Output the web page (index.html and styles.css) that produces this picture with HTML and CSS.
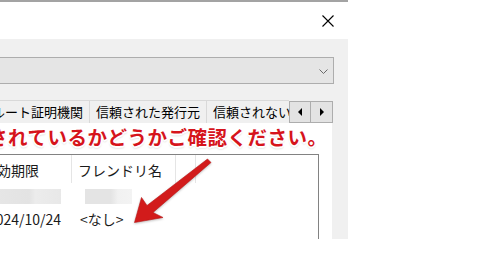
FILE: index.html
```html
<!DOCTYPE html>
<html lang="ja">
<head>
<meta charset="utf-8">
<link rel="stylesheet" href="styles.css">
</head>
<body>
<div class="window">
  <div class="titlebar">
    <svg class="close" width="12" height="12" viewBox="0 0 12 12"><path d="M0.5 0.5 L11.5 11.5 M11.5 0.5 L0.5 11.5" stroke="#000" stroke-width="1.1" fill="none"/></svg>
  </div>
  <div class="content">
    <div class="combo">
      <svg class="chev" width="9" height="5" viewBox="0 0 9 5"><path d="M0.5 0.5 L4.5 4.5 L8.5 0.5" stroke="#6a6a6a" stroke-width="1" fill="none"/></svg>
    </div>
    <div class="tabrow">
      <div class="tabs">
        <div class="tab tab-first">信頼されたルート証明機関</div>
        <div class="tab">信頼された発行元</div>
        <div class="tab">信頼されない発行元</div>
      </div>
      <div class="scroll">
        <div class="sbtn"><span class="tri tri-left"></span></div>
        <div class="sbtn"><span class="tri tri-right"></span></div>
      </div>
    </div>
    <div class="panel">
      <div class="list">
        <div class="lhead">
          <div class="col c1">有効期限</div>
          <div class="col c2">フレンドリ名</div>
          <div class="col c3"></div>
        </div>
        <div class="lrow blurrow">
          <div class="blur b1"></div>
          <div class="blur b2"></div>
        </div>
        <div class="lrow datarow">
          <div class="col c1">2024/10/24</div>
          <div class="col c2">&lt;なし&gt;</div>
        </div>
      </div>
      <div class="note">されているかどうかご確認ください。</div>
    </div>
  </div>
  <svg class="arrow" width="500" height="256" viewBox="0 0 500 256">
    <polygon points="207.5,159 147,205.5 141.5,197.5 134.5,222.5 163,217.5 153,212.5 211,162.5" fill="#d21b1b" stroke="#b81414" stroke-width="0.6" stroke-linejoin="round"/>
  </svg>
</div>
</body>
</html>
```
FILE: styles.css
```css
html, body {
  margin: 0;
  padding: 0;
  background: #ffffff;
}
body {
  font-family: "Noto Sans CJK JP", "Noto Sans", sans-serif;
  width: 500px;
  height: 256px;
  overflow: hidden;
}
.window {
  width: 348px;
  height: 239px;
  overflow: hidden;
  border-top: 2px solid #a3a3a3;
  box-sizing: border-box;
  display: flex;
  flex-direction: column;
}
.titlebar {
  height: 37px;
  background: #ffffff;
  display: flex;
  align-items: center;
  justify-content: flex-end;
  padding-right: 14px;
  flex: none;
}
.close {
  display: block;
  margin-top: 1px;
}
.content {
  flex: 1;
  background: #f0f0f0;
  padding-top: 18px;
  display: flex;
  flex-direction: column;
  min-height: 0;
}
.combo {
  height: 27px;
  box-sizing: border-box;
  width: 338px;
  margin-left: -4px;
  background: #e5e5e5;
  border: 1px solid #adadad;
  display: flex;
  align-items: center;
  justify-content: flex-end;
  padding-right: 5px;
  flex: none;
}
.chev {
  display: block;
  margin-top: 1px;
}
.tabrow {
  margin-top: 16px;
  height: 23px;
  width: 333px;
  display: flex;
  flex: none;
}
.tabs {
  flex: 1;
  display: flex;
  overflow: hidden;
  min-width: 0;
}
.tab {
  flex: none;
  height: 23px;
  box-sizing: border-box;
  padding: 0 6px;
  font-size: 13px;
  line-height: 21px;
  color: #000;
  background: #f0f0f0;
  border: 1px solid #d9d9d9;
  border-left: none;
  border-bottom: none;
  white-space: nowrap;
}
.tab-first {
  margin-left: -79px;
}
.scroll {
  display: flex;
  flex: none;
  margin-top: 1px;
  height: 22px;
}
.sbtn {
  width: 22px;
  height: 22px;
  box-sizing: border-box;
  background: #e3e3e3;
  border: 1px solid #adadad;
  display: flex;
  align-items: center;
  justify-content: center;
}
.sbtn + .sbtn {
  border-left: none;
}
.tri {
  width: 0;
  height: 0;
  border-top: 4px solid transparent;
  border-bottom: 4px solid transparent;
}
.tri-left {
  border-right: 4px solid #000;
}
.tri-right {
  border-left: 4px solid #000;
}
.panel {
  flex: 1;
  width: 332px;
  background: #ffffff;
  position: relative;
  padding-top: 31px;
  box-sizing: border-box;
  min-height: 0;
}
.list {
  width: 319px;
  height: 100px;
  box-sizing: border-box;
  border-top: 1px solid #828282;
  border-right: 1px solid #828282;
  font-size: 14px;
  color: #1a1a1a;
}
.lhead {
  display: flex;
  height: 28px;
}
.lhead .col {
  border-right: 1px solid #e5e5e5;
  line-height: 30px;
}
.col {
  flex: none;
  box-sizing: border-box;
  white-space: nowrap;
}
.c1 {
  width: 90px;
  margin-left: -18px;
  padding-left: 1px;
}
.c2 {
  width: 104px;
  padding-left: 6px;
}
.datarow .c1 {
  padding-left: 6px;
}
.datarow .c2 {
  padding-left: 8px;
}
.c3 {
  width: 20px;
}
.blurrow {
  display: flex;
  height: 15px;
  margin-top: 6px;
}
.blur {
  height: 15px;
  flex: none;
}
.b1 {
  width: 64px;
  margin-left: -3px;
  background: linear-gradient(90deg, #e6e6e6 0%, #e3e3e3 50%, #ececec 60%, #e8e8e8 100%);
  filter: blur(0.6px);
}
.b2 {
  width: 47px;
  margin-left: 24px;
  background: linear-gradient(90deg, #e4e4e4 0%, #e4e4e4 55%, #f1f1f1 70%, #f3f3f3 100%);
  filter: blur(0.6px);
}
.datarow {
  display: flex;
  height: 22px;
  line-height: 22px;
  margin-top: 4px;
}
.note {
  position: absolute;
  left: -12px;
  top: 1px;
  font-size: 19.5px;
  font-weight: bold;
  letter-spacing: 0.5px;
  line-height: 26px;
  color: #d6141c;
  white-space: nowrap;
  text-shadow:
    1.5px 0 0 #fff, -1.5px 0 0 #fff, 0 1.5px 0 #fff, 0 -1.5px 0 #fff,
    1px 1px 0 #fff, -1px -1px 0 #fff, 1px -1px 0 #fff, -1px 1px 0 #fff,
    0 2px 2px rgba(0,0,0,0.25);
}
.arrow {
  position: absolute;
  left: 0;
  top: 0;
  pointer-events: none;
  filter: drop-shadow(0 1px 1px rgba(0,0,0,0.25));
}
```
